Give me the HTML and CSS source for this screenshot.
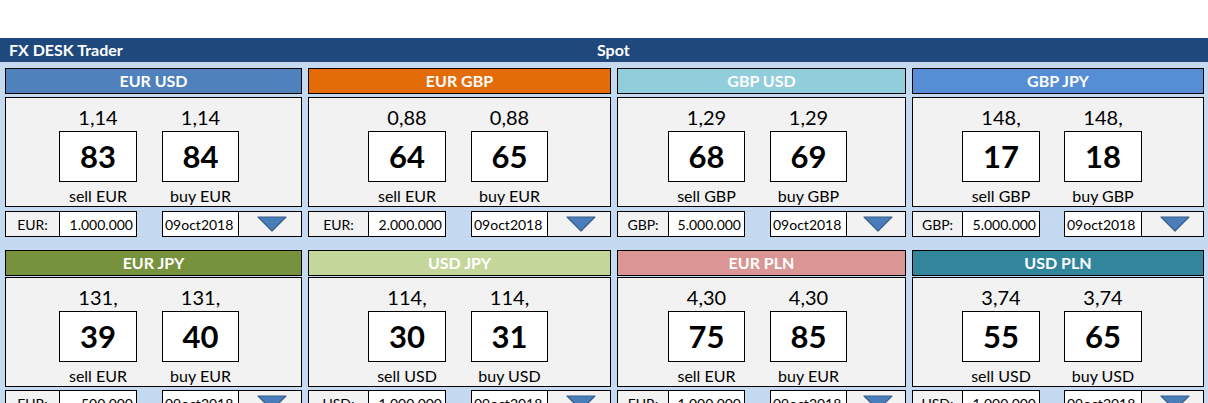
FILE: index.html
```html
<!DOCTYPE html>
<html lang="en">
<head>
<meta charset="utf-8">
<title>FX DESK Trader</title>
<link rel="stylesheet" href="styles.css">
</head>
<body>
<div class="topspace"></div>
<header class="titlebar">
  <span class="app">FX DESK Trader</span>
  <span class="mode">Spot</span>
</header>
<main class="sheet">
  <section class="row row-first">
    <article class="card col1">
      <div class="head h-eurusd">EUR USD</div>
      <div class="body">
        <div class="rate r1">1,14</div><div class="rate r2">1,14</div>
        <div class="pip p1">83</div><div class="pip p2">84</div>
        <div class="lab l1">sell EUR</div><div class="lab l2">buy EUR</div>
      </div>
      <div class="deal">
        <div class="ccy">EUR:</div><div class="amt">1.000.000</div>
        <div class="date">09oct2018</div><div class="pick"><svg class="tri" viewBox="0 0 30 16" width="30" height="16"><polygon points="1,1 29,1 15,15" /></svg></div>
      </div>
    </article>
    <article class="card col2">
      <div class="head h-eurgbp">EUR GBP</div>
      <div class="body">
        <div class="rate r1">0,88</div><div class="rate r2">0,88</div>
        <div class="pip p1">64</div><div class="pip p2">65</div>
        <div class="lab l1">sell EUR</div><div class="lab l2">buy EUR</div>
      </div>
      <div class="deal">
        <div class="ccy">EUR:</div><div class="amt">2.000.000</div>
        <div class="date">09oct2018</div><div class="pick"><svg class="tri" viewBox="0 0 30 16" width="30" height="16"><polygon points="1,1 29,1 15,15" /></svg></div>
      </div>
    </article>
    <article class="card col3">
      <div class="head h-gbpusd">GBP USD</div>
      <div class="body">
        <div class="rate r1">1,29</div><div class="rate r2">1,29</div>
        <div class="pip p1">68</div><div class="pip p2">69</div>
        <div class="lab l1">sell GBP</div><div class="lab l2">buy GBP</div>
      </div>
      <div class="deal">
        <div class="ccy">GBP:</div><div class="amt">5.000.000</div>
        <div class="date">09oct2018</div><div class="pick"><svg class="tri" viewBox="0 0 30 16" width="30" height="16"><polygon points="1,1 29,1 15,15" /></svg></div>
      </div>
    </article>
    <article class="card col4">
      <div class="head h-gbpjpy">GBP JPY</div>
      <div class="body">
        <div class="rate r1">148,</div><div class="rate r2">148,</div>
        <div class="pip p1">17</div><div class="pip p2">18</div>
        <div class="lab l1">sell GBP</div><div class="lab l2">buy GBP</div>
      </div>
      <div class="deal">
        <div class="ccy">GBP:</div><div class="amt">5.000.000</div>
        <div class="date">09oct2018</div><div class="pick"><svg class="tri" viewBox="0 0 30 16" width="30" height="16"><polygon points="1,1 29,1 15,15" /></svg></div>
      </div>
    </article>
  </section>
  <section class="row row-second">
    <article class="card col1">
      <div class="head h-eurjpy">EUR JPY</div>
      <div class="body">
        <div class="rate r1">131,</div><div class="rate r2">131,</div>
        <div class="pip p1">39</div><div class="pip p2">40</div>
        <div class="lab l1">sell EUR</div><div class="lab l2">buy EUR</div>
      </div>
      <div class="deal">
        <div class="ccy">EUR:</div><div class="amt">500.000</div>
        <div class="date">09oct2018</div><div class="pick"><svg class="tri" viewBox="0 0 30 16" width="30" height="16"><polygon points="1,1 29,1 15,15" /></svg></div>
      </div>
    </article>
    <article class="card col2">
      <div class="head h-usdjpy">USD JPY</div>
      <div class="body">
        <div class="rate r1">114,</div><div class="rate r2">114,</div>
        <div class="pip p1">30</div><div class="pip p2">31</div>
        <div class="lab l1">sell USD</div><div class="lab l2">buy USD</div>
      </div>
      <div class="deal">
        <div class="ccy">USD:</div><div class="amt">1.000.000</div>
        <div class="date">09oct2018</div><div class="pick"><svg class="tri" viewBox="0 0 30 16" width="30" height="16"><polygon points="1,1 29,1 15,15" /></svg></div>
      </div>
    </article>
    <article class="card col3">
      <div class="head h-eurpln">EUR PLN</div>
      <div class="body">
        <div class="rate r1">4,30</div><div class="rate r2">4,30</div>
        <div class="pip p1">75</div><div class="pip p2">85</div>
        <div class="lab l1">sell EUR</div><div class="lab l2">buy EUR</div>
      </div>
      <div class="deal">
        <div class="ccy">EUR:</div><div class="amt">1.000.000</div>
        <div class="date">09oct2018</div><div class="pick"><svg class="tri" viewBox="0 0 30 16" width="30" height="16"><polygon points="1,1 29,1 15,15" /></svg></div>
      </div>
    </article>
    <article class="card col4">
      <div class="head h-usdpln">USD PLN</div>
      <div class="body">
        <div class="rate r1">3,74</div><div class="rate r2">3,74</div>
        <div class="pip p1">55</div><div class="pip p2">65</div>
        <div class="lab l1">sell USD</div><div class="lab l2">buy USD</div>
      </div>
      <div class="deal">
        <div class="ccy">USD:</div><div class="amt">1.000.000</div>
        <div class="date">09oct2018</div><div class="pick"><svg class="tri" viewBox="0 0 30 16" width="30" height="16"><polygon points="1,1 29,1 15,15" /></svg></div>
      </div>
    </article>
  </section>
</main>
</body>
</html>
```
FILE: styles.css
```css
* { box-sizing: border-box; }
html, body {
  margin: 0;
  padding: 0;
  height: 403px;
  overflow: hidden;
  background: #c5d9f1;
  font-family: Lato, "Open Sans", "DejaVu Sans", sans-serif;
  color: #000;
}
.topspace { height: 38px; background: #fff; }
.titlebar {
  height: 24px;
  background: #1f497d;
  color: #fff;
  font-weight: 700;
  font-size: 16px;
  line-height: 24px;
  display: grid;
  grid-template-columns: 588px auto;
  padding-left: 9px;
}
.sheet { padding: 6px 0 0 5px; }
.row {
  display: grid;
  grid-template-columns: 297px 303px 289px 292px;
  column-gap: 6px;
}
.row + .row { margin-top: 13px; }

.card { display: flex; flex-direction: column; }
.col1 { --a: 54px; --b: 78px; --c: 25px; --d: 77px; }
.col2 { --a: 60px; --b: 78px; --c: 25px; --d: 77px; }
.col3 { --a: 51px; --b: 77px; --c: 25px; --d: 77px; }
.col4 { --a: 50px; --b: 78px; --c: 24px; --d: 78px; }

.head {
  height: 26px;
  border: 1px solid #000;
  color: #fff;
  font-weight: 700;
  font-size: 16px;
  line-height: 24px;
  text-align: center;
  margin-bottom: 3px;
}
.row-second .head { margin-bottom: 1px; }
.h-eurusd { background: #4f81bd; }
.h-eurgbp { background: #e36c09; }
.h-gbpusd { background: #92cddc; }
.h-gbpjpy { background: #558ed5; }
.h-eurjpy { background: #76923c; }
.h-usdjpy { background: #c4d79b; }
.h-eurpln { background: #da9694; }
.h-usdpln { background: #31869b; }

.body {
  height: 110px;
  border: 1px solid #000;
  background: #f2f2f2;
  display: grid;
  grid-template-columns: calc(var(--a) - 1px) var(--b) var(--c) var(--d) 1fr;
  grid-template-rows: 33px 51px 24px;
  margin-bottom: 4px;
}
.row-second .body { margin-bottom: 3px; }
.rate {
  grid-row: 1;
  font-size: 20px;
  line-height: 24px;
  padding-top: 7px;
  text-align: center;
}
.r1, .p1, .l1 { grid-column: 2; }
.r2, .p2, .l2 { grid-column: 4; }
.pip {
  grid-row: 2;
  background: #fff;
  border: 1px solid #000;
  font-weight: 700;
  font-size: 31px;
  line-height: 49px;
  text-align: center;
}
.lab {
  grid-row: 3;
  font-size: 16px;
  line-height: 20px;
  padding-top: 4px;
  text-align: center;
}

.deal {
  height: 26px;
  display: grid;
  grid-template-columns: var(--a) var(--b) var(--c) var(--d) 1fr;
  font-size: 14px;
  line-height: 24px;
}
.deal > div { height: 26px; }
.ccy {
  grid-column: 1;
  background: #f2f2f2;
  border: 1px solid #000;
  border-right: none;
  text-align: center;
  padding-top: 1px;
}
.amt {
  grid-column: 2;
  background: #fff;
  border: 1px solid #000;
  text-align: right;
  padding: 1px 3px 0 0;
}
.date {
  grid-column: 4;
  background: #fff;
  border: 1px solid #000;
  padding: 1px 0 0 2px;
}
.pick {
  grid-column: 5;
  background: #f2f2f2;
  border: 1px solid #000;
  border-left: none;
  display: flex;
  align-items: center;
  justify-content: center;
  padding-left: 4px;
}
.tri { display: block; }
.tri polygon {
  fill: #4a7ebb;
  stroke: #385d8a;
  stroke-width: 1.2;
  stroke-linejoin: round;
}
```
